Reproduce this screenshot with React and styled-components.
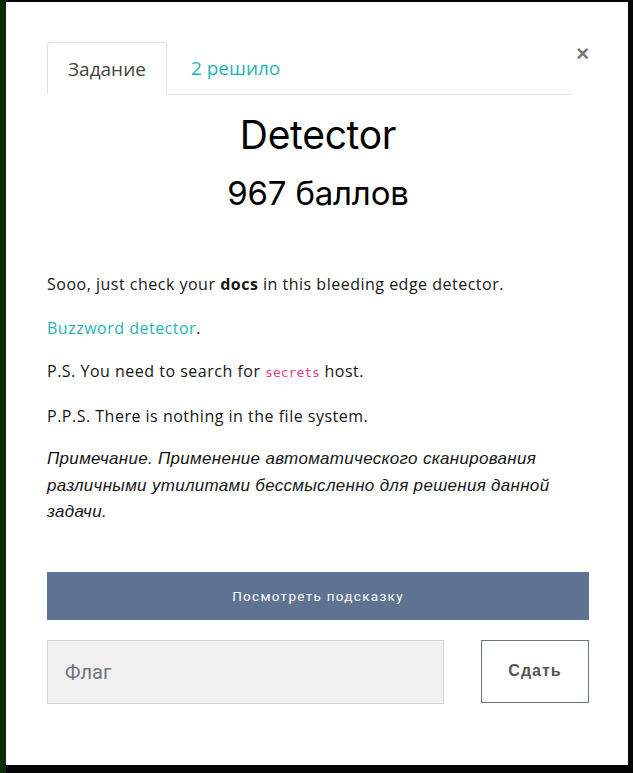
import React from "react";
import styled, { createGlobalStyle } from "styled-components";

const Global = createGlobalStyle`
  html, body {
    margin: 0;
    padding: 0;
    background: #050805;
  }
`;

const Backdrop = styled.div`
  width: 633px;
  height: 773px;
  box-sizing: border-box;
  padding: 2px 5px 8px 6px;
  background: linear-gradient(90deg, #0d2a0d 0px, #0d2a0d 6px, #050505 6px);
`;

const Modal = styled.div`
  background: #fff;
  height: 100%;
  box-sizing: border-box;
  padding: 40px 39px 0 41px;
  display: flex;
  flex-direction: column;
  font-family: "Open Sans", Roboto, sans-serif;
  color: #161616;
`;

const Head = styled.div`
  display: flex;
  align-items: flex-start;
`;

const Tabs = styled.div`
  flex: 1;
  display: flex;
  border-bottom: 1px solid #dee2e6;
  height: 52px;
`;

const Tab = styled.div`
  box-sizing: border-box;
  height: ${(p) => (p.$active ? "53px" : "52px")};
  padding: 0 ${(p) => (p.$active ? "20px" : "23px")};
  display: flex;
  align-items: center;
  font-size: 19px;
  color: ${(p) => (p.$active ? "#444" : "#1fb5b8")};
  border: 1px solid ${(p) => (p.$active ? "#dee2e6" : "transparent")};
  border-bottom-color: ${(p) => (p.$active ? "#fff" : "transparent")};
  border-radius: 4px 4px 0 0;
  background: #fff;
`;

const Close = styled.div`
  width: 17px;
  text-align: right;
  font-family: "Liberation Sans", Arial, sans-serif;
  font-weight: 700;
  font-size: 22px;
  line-height: 22px;
  color: #777;
  margin-top: 1px;
`;

const Title = styled.h1`
  margin: 17px 0 0;
  text-align: center;
  font-weight: 400;
  font-size: 39px;
  line-height: 46px;
  font-family: Inter, "Noto Sans", sans-serif;
  letter-spacing: -0.3px;
  color: #000;
`;

const Points = styled.h2`
  margin: 15px 0 0;
  text-align: center;
  font-weight: 400;
  font-size: 33px;
  line-height: 40px;
  font-family: Inter, "Noto Sans", sans-serif;
  letter-spacing: -0.2px;
  color: #000;
`;

const Body = styled.div`
  margin-top: 58px;
  font-size: 16px;
  line-height: 27px;
`;

const P = styled.p`
  margin: 0 0 16.5px;
  font-style: ${(p) => (p.$note ? "italic" : "normal")};
  font-family: ${(p) => (p.$note ? `"Liberation Sans", Arial, sans-serif` : "inherit")};
  font-size: ${(p) => (p.$note ? "17px" : "16px")};
  letter-spacing: ${(p) => (p.$note ? "0.3px" : "0.5px")};
  line-height: ${(p) => (p.$note ? "26.5px" : "27px")};
`;

const Link = styled.a`
  color: #1fb5b8;
  text-decoration: none;
`;

const Code = styled.code`
  font-family: "DejaVu Sans Mono", monospace;
  font-size: 13px;
  letter-spacing: 0;
  color: #e83e8c;
`;

const HintButton = styled.button`
  margin-top: 30px;
  height: 48px;
  border: none;
  background: #5d7391;
  color: #fff;
  font-family: Roboto, sans-serif;
  font-size: 13.5px;
  font-weight: 400;
  letter-spacing: 1.3px;
  cursor: pointer;
`;

const SubmitRow = styled.div`
  margin-top: 20px;
  display: flex;
  gap: 37px;
`;

const FlagInput = styled.input`
  width: 397px;
  height: 64px;
  box-sizing: border-box;
  background: #f0f0f0;
  border: 1px solid #ced4da;
  padding: 0 17px;
  font-family: Roboto, sans-serif;
  font-size: 20px;
  color: #333;
  outline: none;
  &::placeholder {
    color: #6c757d;
  }
`;

const SubmitButton = styled.button`
  width: 108px;
  height: 63px;
  background: #fff;
  border: 1px solid #6c757d;
  font-family: "Liberation Sans", Arial, sans-serif;
  font-weight: 700;
  font-size: 16px;
  letter-spacing: 1px;
  color: #555;
  padding-bottom: 2px;
`;

export default function App() {
  return (
    <>
      <Global />
      <Backdrop>
        <Modal>
          <Head>
            <Tabs>
              <Tab $active>Задание</Tab>
              <Tab>2 решило</Tab>
            </Tabs>
            <Close>×</Close>
          </Head>
          <Title>Detector</Title>
          <Points>967 баллов</Points>
          <Body>
            <P>
              Sooo, just check your <b>docs</b> in this bleeding edge detector.
            </P>
            <P>
              <Link href="#">Buzzword detector</Link>.
            </P>
            <P>
              P.S. You need to search for <Code>secrets</Code> host.
            </P>
            <P>P.P.S. There is nothing in the file system.</P>
            <P $note>
              Примечание. Применение автоматического сканирования различными
              утилитами бессмысленно для решения данной задачи.
            </P>
          </Body>
          <HintButton>Посмотреть подсказку</HintButton>
          <SubmitRow>
            <FlagInput placeholder="Флаг" />
            <SubmitButton>Сдать</SubmitButton>
          </SubmitRow>
        </Modal>
      </Backdrop>
    </>
  );
}
